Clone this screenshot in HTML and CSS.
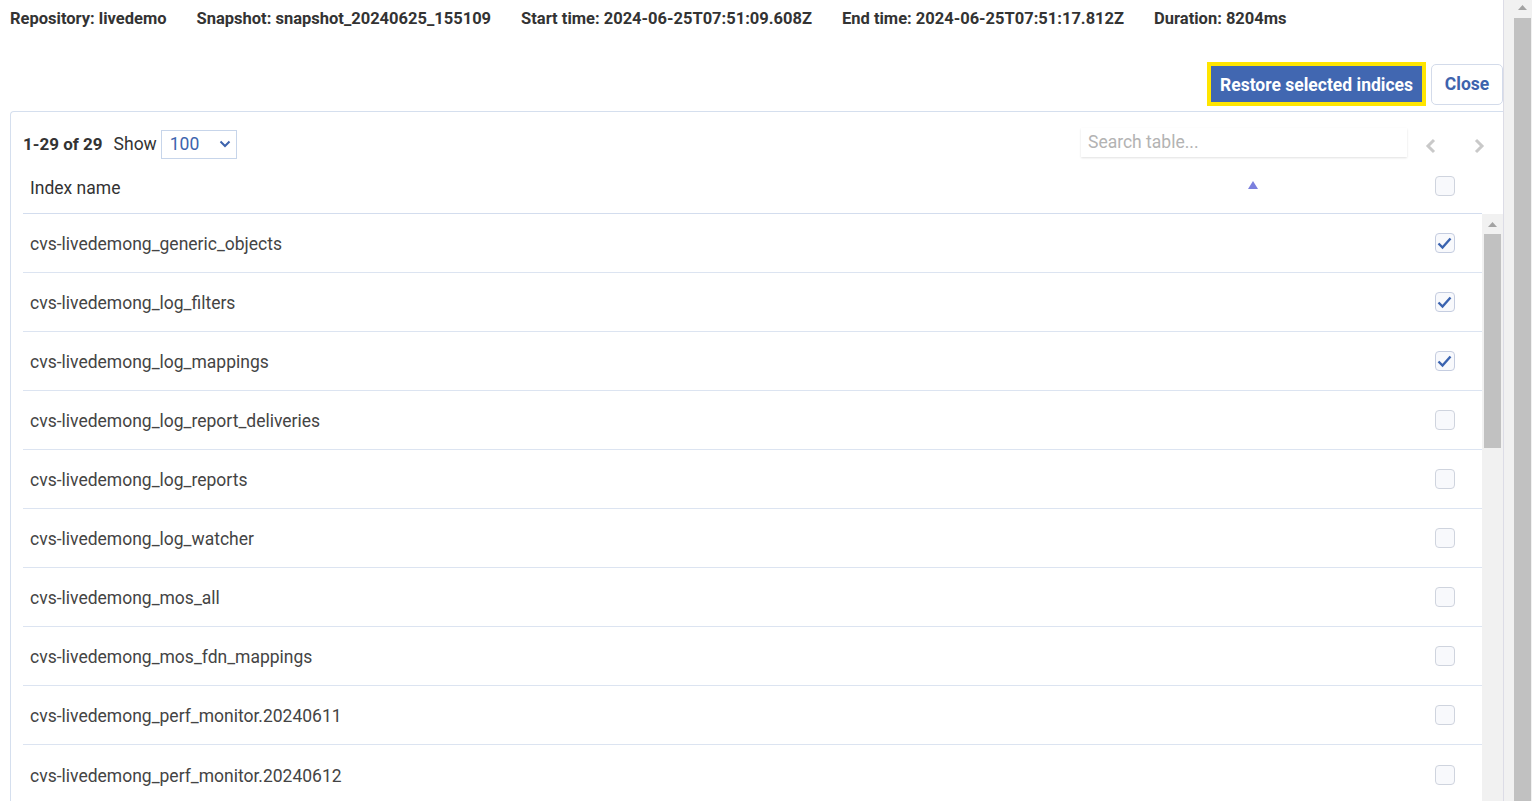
FILE: index.html
```html
<!DOCTYPE html>
<html lang="en">
<head>
<meta charset="utf-8">
<title>Snapshot restore</title>
<link rel="stylesheet" href="styles.css">
</head>
<body>
<div class="main">
  <div class="info-bar">
    <span>Repository: livedemo</span>
    <span>Snapshot: snapshot_20240625_155109</span>
    <span>Start time: 2024-06-25T07:51:09.608Z</span>
    <span>End time: 2024-06-25T07:51:17.812Z</span>
    <span>Duration: 8204ms</span>
  </div>
  <div class="actions">
    <button class="btn btn-primary">Restore selected indices</button>
    <button class="btn btn-secondary">Close</button>
  </div>
  <div class="card">
    <div class="toolbar">
      <span class="count">1-29 of 29</span>
      <span class="show">Show</span>
      <div class="select">
        <span>100</span>
        <svg class="chev-down" width="12" height="8" viewBox="0 0 12 8"><polyline points="1.5,1.5 6,6 10.5,1.5" fill="none" stroke="#3d63ad" stroke-width="2"/></svg>
      </div>
      <div class="search">Search table...</div>
      <div class="pager">
        <svg width="12" height="16" viewBox="0 0 12 16"><polyline points="9,2 3,8 9,14" fill="none" stroke="#c9c9c9" stroke-width="3"/></svg>
      </div>
      <div class="pager">
        <svg width="12" height="16" viewBox="0 0 12 16"><polyline points="3,2 9,8 3,14" fill="none" stroke="#c9c9c9" stroke-width="3"/></svg>
      </div>
    </div>
    <div class="thead">
      <div class="name-cell head-name">
        <span>Index name</span>
        <svg class="sort" width="10" height="8" viewBox="0 0 10 8"><polygon points="5,0 10,8 0,8" fill="#7b80de"/></svg>
      </div>
      <div class="check-cell"><span class="cb"></span></div>
    </div>
    <div class="tbody">
      <div class="rows">
        <div class="row"><div class="name-cell">cvs-livedemong_generic_objects</div><div class="check-cell"><span class="cb checked"><svg width="20" height="20" viewBox="0 0 20 20"><polyline points="3.5,10.5 7.5,14.5 15.5,5.5" fill="none" stroke="#3a63b0" stroke-width="2.4"/></svg></span></div></div>
        <div class="row"><div class="name-cell">cvs-livedemong_log_filters</div><div class="check-cell"><span class="cb checked"><svg width="20" height="20" viewBox="0 0 20 20"><polyline points="3.5,10.5 7.5,14.5 15.5,5.5" fill="none" stroke="#3a63b0" stroke-width="2.4"/></svg></span></div></div>
        <div class="row"><div class="name-cell">cvs-livedemong_log_mappings</div><div class="check-cell"><span class="cb checked"><svg width="20" height="20" viewBox="0 0 20 20"><polyline points="3.5,10.5 7.5,14.5 15.5,5.5" fill="none" stroke="#3a63b0" stroke-width="2.4"/></svg></span></div></div>
        <div class="row"><div class="name-cell">cvs-livedemong_log_report_deliveries</div><div class="check-cell"><span class="cb"></span></div></div>
        <div class="row"><div class="name-cell">cvs-livedemong_log_reports</div><div class="check-cell"><span class="cb"></span></div></div>
        <div class="row"><div class="name-cell">cvs-livedemong_log_watcher</div><div class="check-cell"><span class="cb"></span></div></div>
        <div class="row"><div class="name-cell">cvs-livedemong_mos_all</div><div class="check-cell"><span class="cb"></span></div></div>
        <div class="row"><div class="name-cell">cvs-livedemong_mos_fdn_mappings</div><div class="check-cell"><span class="cb"></span></div></div>
        <div class="row"><div class="name-cell">cvs-livedemong_perf_monitor.20240611</div><div class="check-cell"><span class="cb"></span></div></div>
        <div class="row last"><div class="name-cell">cvs-livedemong_perf_monitor.20240612</div><div class="check-cell"><span class="cb"></span></div></div>
      </div>
      <div class="vscroll inner">
        <div class="sarrow"><svg width="9" height="5" viewBox="0 0 9 5"><polygon points="4.5,0 9,5 0,5" fill="#a3a3a3"/></svg></div>
        <div class="thumb inner-thumb"></div>
      </div>
    </div>
  </div>
</div>
<div class="vscroll outer">
  <div class="sarrow"><svg width="9" height="5" viewBox="0 0 9 5"><polygon points="4.5,0 9,5 0,5" fill="#a3a3a3"/></svg></div>
  <div class="thumb outer-thumb"></div>
</div>
</body>
</html>
```

FILE: styles.css
```css
* { box-sizing: border-box; }

html, body {
  margin: 0;
  padding: 0;
  height: 801px;
  overflow: hidden;
  background: #ffffff;
  font-family: Roboto, "Liberation Sans", sans-serif;
  color: #333333;
}

body {
  display: flex;
  width: 1532px;
}

.main {
  flex: 1;
  min-width: 0;
  overflow: hidden;
  display: flex;
  flex-direction: column;
}

.info-bar {
  height: 36px;
  display: flex;
  align-items: center;
  gap: 30px;
  padding-left: 10px;
  font-size: 16.5px;
  font-weight: 700;
  color: #333333;
  white-space: nowrap;
}

.actions {
  margin-top: 26px;
  height: 44px;
  display: flex;
  justify-content: flex-end;
  align-items: center;
  gap: 5px;
}

.btn {
  font-family: Roboto, "Liberation Sans", sans-serif;
  font-size: 17.5px;
  font-weight: 700;
  cursor: pointer;
}

.btn-primary {
  height: 44px;
  padding: 1px 9px 0;
  background: #4167b1;
  color: #ffffff;
  border: 4px solid #ffe500;
  border-radius: 0;
}

.btn-secondary {
  height: 41px;
  width: 72px;
  padding-top: 1px;
  background: #ffffff;
  color: #3d63ad;
  border: 1px solid #d3dbea;
  border-radius: 5px;
}

.card {
  margin-top: 5px;
  margin-left: 10px;
  flex: 1;
  border: 1px solid #d5dfee;
  border-right: none;
  border-bottom: none;
  border-radius: 4px 0 0 0;
  padding: 16px 0 0 12px;
  display: flex;
  flex-direction: column;
  min-height: 0;
}

.toolbar {
  height: 32px;
  display: flex;
  align-items: center;
}

.count {
  font-size: 17px;
  font-weight: 700;
  color: #333333;
}

.show {
  margin-left: 11px;
  font-size: 17.5px;
  color: #333333;
}

.select {
  margin-left: 4px;
  width: 76px;
  height: 29px;
  border: 1px solid #c7d5ea;
  display: flex;
  align-items: center;
  justify-content: space-between;
  padding: 0 5px 0 8px;
  font-size: 17.5px;
  color: #3d63ad;
}

.search {
  margin-left: auto;
  align-self: flex-start;
  width: 326px;
  height: 29px;
  padding-left: 7px;
  padding-bottom: 1px;
  display: flex;
  align-items: center;
  font-size: 17.5px;
  color: #b3b3b3;
  box-shadow: 0 1px 2px rgba(0, 0, 0, 0.12);
}

.pager {
  width: 48px;
  height: 32px;
  display: flex;
  align-items: center;
  justify-content: center;
  padding-top: 3px;
}

.thead {
  height: 54px;
  margin-right: 21px;
  display: flex;
  align-items: center;
  border-bottom: 1px solid #d3ddee;
}

.name-cell {
  flex: 1;
  padding-left: 7px;
  padding-top: 2px;
  font-size: 17.5px;
  color: #444444;
  white-space: nowrap;
}

.head-name {
  display: flex;
  align-items: center;
  color: #333333;
}

.sort {
  margin-left: auto;
  margin-right: 150px;
  margin-top: -6px;
}

.check-cell {
  width: 74px;
  display: flex;
  justify-content: center;
  align-items: center;
}

.cb {
  width: 20px;
  height: 20px;
  border: 1px solid #cfd4de;
  border-radius: 4px;
  background: #f8f9fc;
  display: flex;
  align-items: center;
  justify-content: center;
}

.thead .cb {
  margin-top: -1px;
}

.cb.checked {
  border-color: #c5cde0;
}

.cb svg {
  flex: none;
}

.tbody {
  flex: 1;
  display: flex;
  min-height: 0;
}

.rows {
  flex: 1;
  overflow: hidden;
}

.row {
  height: 59px;
  display: flex;
  align-items: center;
  border-bottom: 1px solid #dce4f1;
}

.row.last {
  height: 57px;
  padding-top: 2px;
  border-bottom: none;
}

.vscroll {
  background: #f1f1f1;
  display: flex;
  flex-direction: column;
}

.vscroll.inner {
  width: 21px;
  padding-left: 2px;
  padding-right: 2px;
}

.vscroll.outer {
  width: 29px;
  border-left: 1px solid #dcdce6;
  padding-left: 10px;
  padding-right: 1px;
}

.sarrow {
  height: 20px;
  display: flex;
  justify-content: center;
  align-items: center;
}

.vscroll.outer .sarrow {
  height: 18px;
  padding-bottom: 3px;
}

.thumb {
  background: #c1c1c1;
}

.inner-thumb {
  height: 214px;
}

.outer-thumb {
  flex: 1;
}
```
